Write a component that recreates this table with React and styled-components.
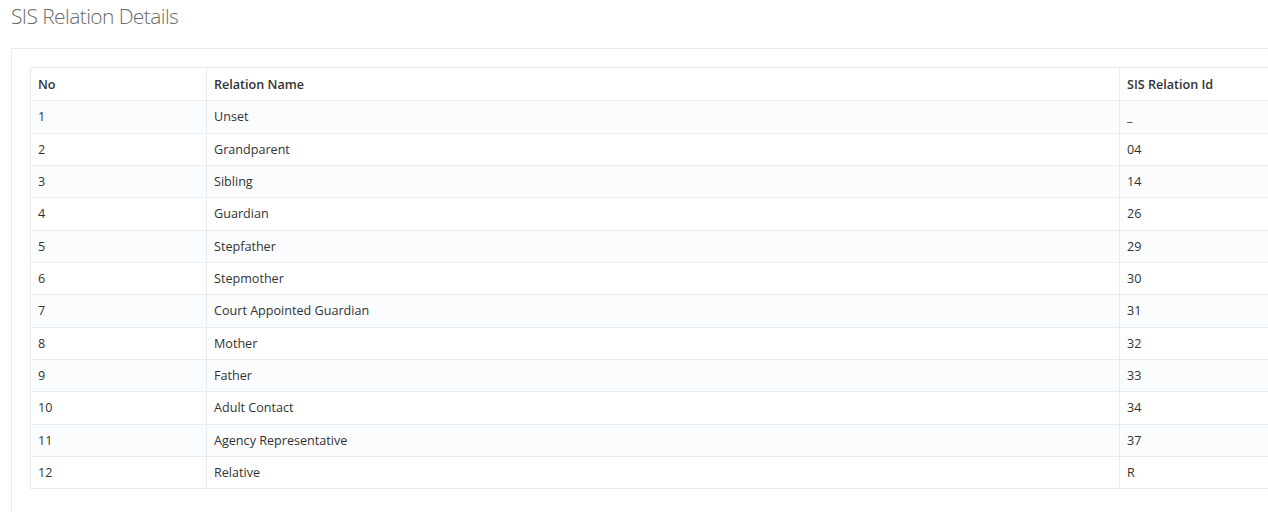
import React from "react";
import styled, { createGlobalStyle } from "styled-components";

const GlobalStyle = createGlobalStyle`
  html, body {
    margin: 0;
    padding: 0;
    background: #fff;
    overflow: hidden;
  }
  body {
    font-family: "Open Sans", "Liberation Sans", sans-serif;
    font-size: 12.6px;
    color: #333;
  }
`;

const Page = styled.div`
  padding: 0 0 0 11px;
  width: 1300px;
`;

const Title = styled.h3`
  margin: 0;
  padding: 2px 0 0 0;
  height: 46px;
  font-family: "Open Sans Light", "Open Sans", sans-serif;
  font-size: 21px;
  font-weight: 300;
  color: #6b6b6b;
  line-height: 29px;
  letter-spacing: -0.6px;
`;

const Panel = styled.section`
  border: 1px solid #e7ecf1;
  border-right: none;
  padding: 18px;
  min-height: 460px;
`;

const Table = styled.table`
  border-collapse: collapse;
  table-layout: fixed;
  width: 1266px;
`;

const Cell = styled.td`
  border: 1px solid #e7ecf1;
  padding: ${(p) => (p.$head ? "8.5px 7px" : "8px 7px")};
  line-height: 15.33px;
  text-align: left;
  vertical-align: middle;
  font-weight: ${(p) => (p.$head ? 600 : 400)};
  color: #333;
`;

const Row = styled.tr`
  background: ${(p) => (p.$striped ? "#fbfcfd" : "#fff")};
`;

const rows = [
  ["1", "Unset", "_"],
  ["2", "Grandparent", "04"],
  ["3", "Sibling", "14"],
  ["4", "Guardian", "26"],
  ["5", "Stepfather", "29"],
  ["6", "Stepmother", "30"],
  ["7", "Court Appointed Guardian", "31"],
  ["8", "Mother", "32"],
  ["9", "Father", "33"],
  ["10", "Adult Contact", "34"],
  ["11", "Agency Representative", "37"],
  ["12", "Relative", "R"],
];

export default function App() {
  return (
    <>
      <GlobalStyle />
      <Page>
        <Title>SIS Relation Details</Title>
        <Panel>
          <Table>
            <colgroup>
              <col style={{ width: 176 }} />
              <col style={{ width: 913 }} />
              <col style={{ width: 177 }} />
            </colgroup>
            <thead>
              <Row>
                <Cell as="th" $head>No</Cell>
                <Cell as="th" $head>Relation Name</Cell>
                <Cell as="th" $head>SIS Relation Id</Cell>
              </Row>
            </thead>
            <tbody>
              {rows.map((r, i) => (
                <Row key={r[0]} $striped={i % 2 === 0}>
                  <Cell>{r[0]}</Cell>
                  <Cell>{r[1]}</Cell>
                  <Cell>{r[2]}</Cell>
                </Row>
              ))}
            </tbody>
          </Table>
        </Panel>
      </Page>
    </>
  );
}
